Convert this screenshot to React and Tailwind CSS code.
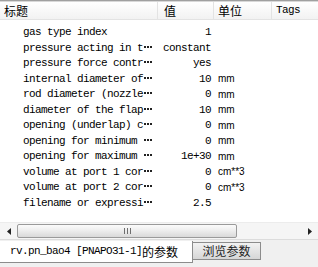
import React from "react";

const mono = { fontFamily: "'Liberation Mono', 'Noto Sans CJK SC', monospace" };

const rows = [
  ["gas type index", false, "1", ""],
  ["pressure acting in t", true, "constant", ""],
  ["pressure force contr", true, "yes", ""],
  ["internal diameter of", true, "10", "mm"],
  ["rod diameter (nozzle", true, "0", "mm"],
  ["diameter of the flap", true, "10", "mm"],
  ["opening (underlap) c", true, "0", "mm"],
  ["opening for minimum ", true, "0", "mm"],
  ["opening for maximum ", true, "1e+30", "mm"],
  ["volume at port 1 cor", true, "0", "cm**3"],
  ["volume at port 2 cor", true, "0", "cm**3"],
  ["filename or expressi", true, "2.5", ""],
];

function Dots() {
  return (
    <span className="inline-flex gap-[1px] ml-[1px] mb-[6px]">
      <span className="w-[2px] h-[2px] bg-[#222]" />
      <span className="w-[2px] h-[2px] bg-[#222]" />
      <span className="w-[2px] h-[2px] bg-[#222]" />
    </span>
  );
}

export default function App() {
  return (
    <div
      className="w-[318px] h-[267px] bg-white flex flex-col overflow-hidden text-black"
      style={mono}
    >
      <div className="h-[1px] bg-[#a0a0a0]" />
      <div className="h-[1px] bg-[#d8d8d8]" />
      <div className="h-[18px] flex items-stretch bg-gradient-to-b from-white to-[#f2f2f2] border-b border-[#e3e3e3] text-[11px] tracking-[-0.6px]">
        <div className="w-[157px] pl-[4px] flex items-center text-[12px] tracking-normal font-['Noto_Sans_CJK_SC',sans-serif]">
          标题
        </div>
        <div className="w-[56px] pl-[6px] flex items-center border-l border-[#e3e3e3] text-[12px] tracking-normal font-['Noto_Sans_CJK_SC',sans-serif]">
          值
        </div>
        <div className="w-[58px] pl-[4px] flex items-center border-l border-[#e3e3e3] text-[12px] tracking-normal font-['Noto_Sans_CJK_SC',sans-serif]">
          单位
        </div>
        <div className="flex-1 pl-[4px] flex items-center border-l border-[#e3e3e3]">Tags</div>
      </div>
      <div className="flex flex-col pt-[5px] text-[11px] tracking-[-0.6px]">
        {rows.map(([name, trunc, val, unit], i) => (
          <div key={i} className="h-[15.5px] flex items-center whitespace-pre leading-none">
            <div className="w-[157px] pl-[23px] flex items-end">
              <span>{name}</span>
              {trunc && <Dots />}
            </div>
            <div className="w-[54px] text-right">{val}</div>
            <div className="pl-[7px] text-[10px] tracking-normal font-['Liberation_Sans',sans-serif]">{unit}</div>
          </div>
        ))}
      </div>
      <div className="flex-1" />
      {/* horizontal scrollbar */}
      <div className="h-[17px] flex items-stretch bg-[#f5f5f5] border-t border-[#ececec]">
        <div className="w-[17px] flex items-center justify-center">
          <svg width="4" height="7" viewBox="0 0 4 7">
            <path d="M4 0 L0 3.5 L4 7 Z" fill="#222" />
          </svg>
        </div>
        <div className="w-[220px] my-[1px] rounded-[2px] border border-[#9a9a9a] bg-gradient-to-b from-[#fbfbfb] via-[#ececec] to-[#d9d9d9] flex items-center justify-center">
          <div className="flex gap-[2px]">
            <div className="w-[1px] h-[6px] bg-[#6e6e6e]" />
            <div className="w-[1px] h-[6px] bg-[#6e6e6e]" />
            <div className="w-[1px] h-[6px] bg-[#6e6e6e]" />
          </div>
        </div>
        <div className="flex-1" />
        <div className="w-[17px] flex items-center justify-center">
          <svg width="4" height="7" viewBox="0 0 4 7">
            <path d="M0 0 L4 3.5 L0 7 Z" fill="#222" />
          </svg>
        </div>
      </div>
      {/* tabs */}
      <div className="h-[28px] flex items-start bg-[#f0f0f0] border-t border-[#dcdcdc]">
        <div className="mt-[1px] w-[193px] h-[22px] bg-white border-r border-b border-[#8c8c8c] flex items-center pl-[10px] text-[11px] tracking-[-0.6px] whitespace-pre">
          rv.pn_bao4 [PNAPO31-1]
          <span className="text-[12px] tracking-normal font-['Noto_Sans_CJK_SC',sans-serif]">的参数</span>
        </div>
        <div className="mt-[2px] w-[68px] h-[18px] bg-gradient-to-b from-[#f2f2f2] to-[#d6d6d6] border border-l-0 border-[#8c8c8c] flex items-center justify-center text-[12px] text-[#222] font-['Noto_Sans_CJK_SC',sans-serif]">
          浏览参数
        </div>
      </div>
    </div>
  );
}
